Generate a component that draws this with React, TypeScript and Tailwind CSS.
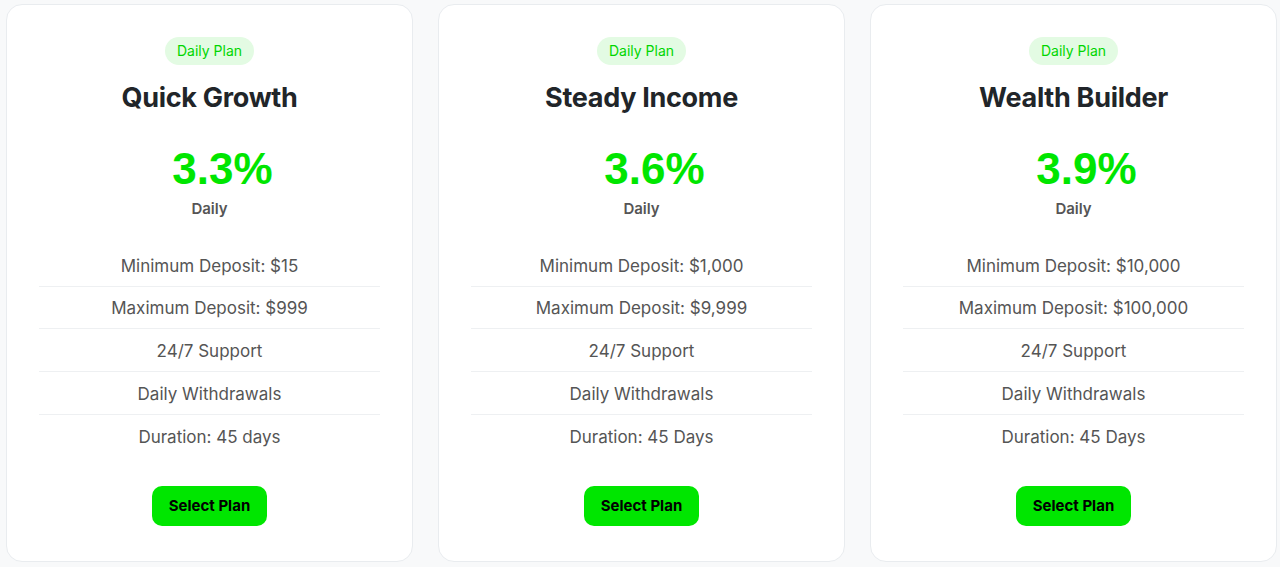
import React from 'react';

interface Plan {
  name: string;
  rate: string;
  min: string;
  max: string;
  duration: string;
}

const plans: Plan[] = [
  { name: 'Quick Growth', rate: '3.3%', min: '$15', max: '$999', duration: '45 days' },
  { name: 'Steady Income', rate: '3.6%', min: '$1,000', max: '$9,999', duration: '45 Days' },
  { name: 'Wealth Builder', rate: '3.9%', min: '$10,000', max: '$100,000', duration: '45 Days' },
];

const PlanCard: React.FC<{ plan: Plan }> = ({ plan }) => {
  const features = [
    `Minimum Deposit: ${plan.min}`,
    `Maximum Deposit: ${plan.max}`,
    '24/7 Support',
    'Daily Withdrawals',
    `Duration: ${plan.duration}`,
  ];

  return (
    <div className="bg-white border border-[#e9ecef] rounded-2xl h-[558px] px-8 pt-8 flex flex-col items-center">
      <span className="h-7 px-3 rounded-full bg-[#e3fbe3] text-[#00d600] text-sm leading-7">Daily Plan</span>
      <h3 className="mt-[16px] text-[27px] leading-[34px] font-bold text-[#212529] font-['Inter',sans-serif] tracking-[-0.3px]">
        {plan.name}
      </h3>
      <div className="mt-[30px] pl-[26px] text-[44px] leading-[48px] font-bold text-[#00e600] font-['Liberation_Sans',Arial,sans-serif]">
        {plan.rate}
      </div>
      <div className="mt-[6px] text-[15px] leading-5 font-semibold text-[#555]">Daily</div>

      <ul className="mt-[25px] w-full">
        {features.map((f, i) => (
          <li
            key={i}
            className={`h-[42.7px] pt-[3px] flex items-center justify-center text-[17px] text-[#555] ${
              i < features.length - 1 ? 'border-b border-[#eef0f2]' : ''
            }`}
          >
            {f}
          </li>
        ))}
      </ul>

      <button className="mt-[29px] h-[40px] px-[17px] rounded-[10px] bg-[#00e600] text-black text-[15px] font-bold">
        Select Plan
      </button>
    </div>
  );
};

export default function App() {
  return (
    <div className="min-h-[567px] bg-[#f8f9fa] pl-[6px] pt-[4px] font-['Inter',sans-serif]">
      <div className="grid grid-cols-[407px_407px_407px] gap-[25px]">
        {plans.map((p) => (
          <PlanCard key={p.name} plan={p} />
        ))}
      </div>
    </div>
  );
}
